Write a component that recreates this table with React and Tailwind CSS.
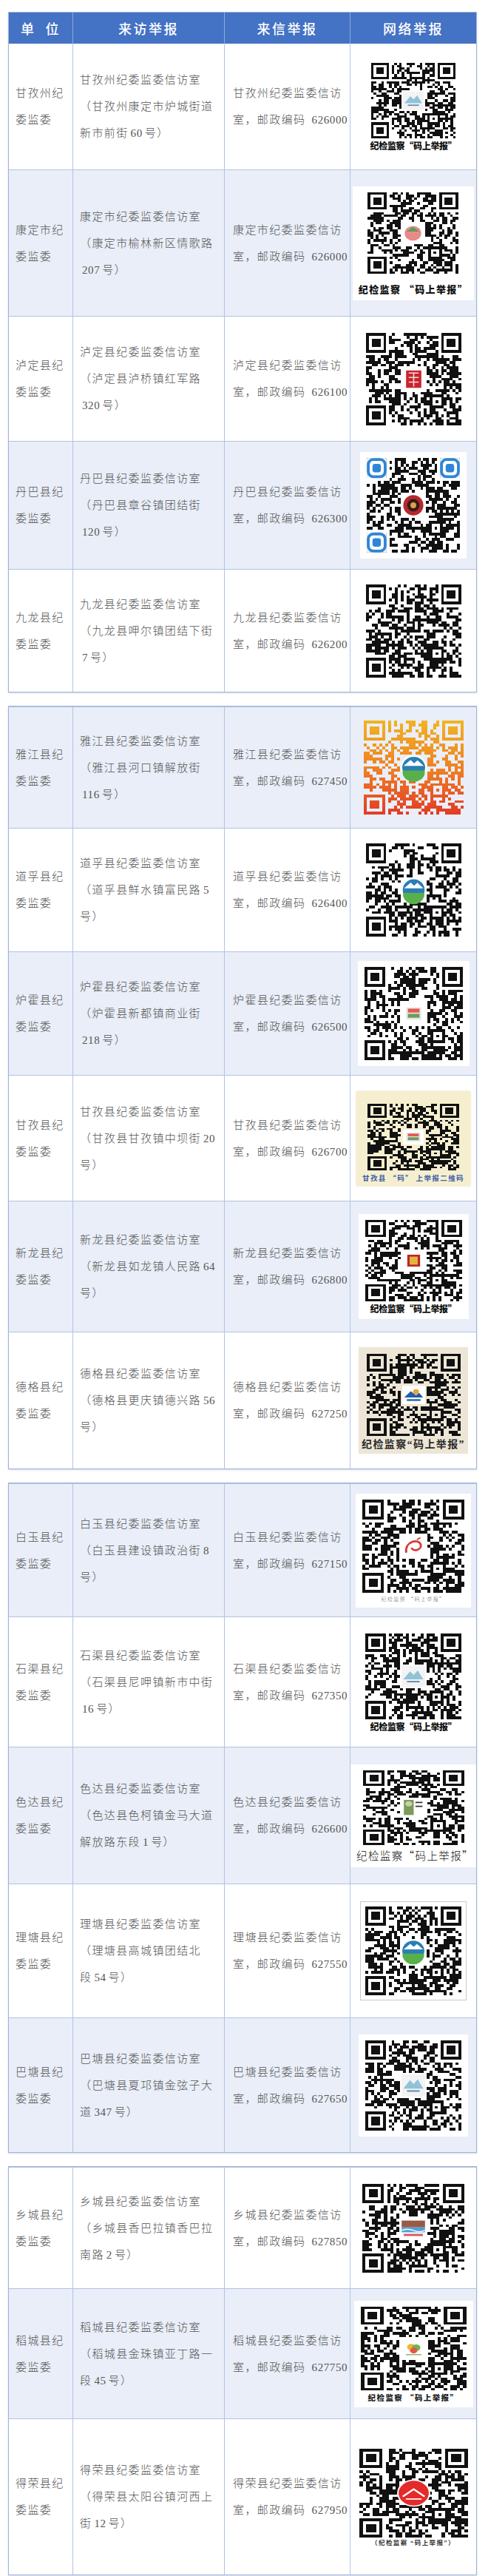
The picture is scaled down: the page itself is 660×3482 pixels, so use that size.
import React from "react";

// seeded random so every QR keeps the same pattern
function rng(seed) {
  let a = seed * 9301 + 49297;
  return function () {
    a |= 0;
    a = (a + 0x6d2b79f5) | 0;
    let t = Math.imul(a ^ (a >>> 15), 1 | a);
    t = (t + Math.imul(t ^ (t >>> 7), 61 | t)) ^ t;
    return ((t ^ (t >>> 14)) >>> 0) / 4294967296;
  };
}

const N = 33;
const C = N / 2;

function qrPath(seed, hole) {
  const r = rng(seed);
  const g = [];
  for (let y = 0; y < N; y++) {
    g.push([]);
    for (let x = 0; x < N; x++) g[y].push(r() < 0.53);
  }
  const finder = (ox, oy) => {
    for (let y = -1; y < 8; y++)
      for (let x = -1; x < 8; x++) {
        const X = ox + x;
        const Y = oy + y;
        if (X < 0 || Y < 0 || X >= N || Y >= N) continue;
        const ring = x === 0 || x === 6 || y === 0 || y === 6;
        const core = x >= 2 && x <= 4 && y >= 2 && y <= 4;
        g[Y][X] = x >= 0 && x <= 6 && y >= 0 && y <= 6 && (ring || core);
      }
  };
  finder(0, 0);
  finder(N - 7, 0);
  finder(0, N - 7);
  const a = N - 9;
  for (let y = a - 2; y <= a + 2; y++)
    for (let x = a - 2; x <= a + 2; x++) {
      const ring = x === a - 2 || x === a + 2 || y === a - 2 || y === a + 2;
      g[y][x] = ring || (x === a && y === a);
    }
  if (hole) {
    for (let y = 12; y < 21; y++) for (let x = 12; x < 21; x++) g[y][x] = false;
  }
  let d = "";
  for (let y = 0; y < N; y++)
    for (let x = 0; x < N; x++) if (g[y][x]) d += `M${x} ${y}h1v1h-1z`;
  return d;
}

// logos are drawn around a 29-module centre, shifted to the middle of the code
function Logo({ kind }) {
  let body = null;
  if (kind === "mountain")
    body = (
      <g>
        <rect x="11" y="11" width="7" height="7" fill="#f3f3f3" />
        <path d="M11.5 15.5 L13.5 12.8 L14.6 14 L15.8 12.5 L17.5 15.5Z" fill="#8fc3d8" />
        <rect x="12.6" y="16" width="3.8" height="0.5" fill="#6a8fb0" />
      </g>
    );
  if (kind === "pink")
    body = (
      <g>
        <rect x="11" y="11" width="7" height="7" fill="#fff" />
        <circle cx="14.5" cy="14.6" r="2.6" fill="#e98a8a" />
        <path d="M12.5 14 L14.5 12.3 L16.5 14Z" fill="#5aa05a" />
      </g>
    );
  if (kind === "seal")
    body = (
      <g>
        <rect x="11.5" y="11.2" width="6" height="6.6" fill="#fff" />
        <rect x="12.2" y="11.8" width="4.6" height="5.4" fill="#c9252c" />
        <path d="M13 12.6h3M13 14h3M13 15.4h3M14.5 12.4v4.4" stroke="#f7d9d9" strokeWidth="0.35" />
      </g>
    );
  if (kind === "camera")
    body = (
      <g>
        <rect x="11" y="11" width="7" height="7" fill="#fff" />
        <circle cx="14.5" cy="14.5" r="3.1" fill="#b5282e" />
        <circle cx="14.5" cy="14.5" r="1.9" fill="#3a1a1a" />
        <circle cx="14.5" cy="14.5" r="0.9" fill="#d8a34a" />
      </g>
    );
  if (kind === "blueCircle")
    body = (
      <g>
        <circle cx="14.5" cy="14.5" r="3.8" fill="#fff" />
        <circle cx="14.5" cy="14.5" r="3.3" fill="#2a7fb5" />
        <path d="M11.6 14 L13.6 12.2 L14.6 13.2 L15.6 12.3 L17.4 14Z" fill="#fff" />
        <path d="M11.3 15.4 h6.4 v1 a3.3 3.3 0 0 1 -6.4 0Z" fill="#58b04a" />
      </g>
    );
  if (kind === "small")
    body = (
      <g>
        <rect x="11.3" y="11.3" width="6.4" height="6.4" rx="0.6" fill="#fff" />
        <rect x="12.3" y="12.6" width="4.4" height="3.8" fill="#e6e6e6" />
        <rect x="12.8" y="13" width="3.4" height="1.2" fill="#e45c4f" />
        <rect x="12.8" y="14.6" width="3.4" height="1.2" fill="#6a9e5c" />
      </g>
    );
  if (kind === "red")
    body = (
      <g>
        <rect x="11.3" y="11.3" width="6.4" height="6.4" fill="#fff" />
        <rect x="12.6" y="12.4" width="3.8" height="4.2" fill="#b7282b" />
        <rect x="13.3" y="13.1" width="2.4" height="2.8" fill="#e8b33b" />
      </g>
    );
  if (kind === "dege")
    body = (
      <g>
        <rect x="11" y="11.3" width="7" height="6.4" fill="#fff" />
        <circle cx="15.2" cy="13.4" r="0.9" fill="#f0a030" />
        <path d="M11.6 15.4 L13.6 13.2 L15.2 14.6 L16.2 13.8 L17.4 15.4Z" fill="#1f5ea8" />
        <rect x="12.4" y="16" width="4.2" height="0.6" fill="#1f5ea8" />
      </g>
    );
  if (kind === "swirl")
    body = (
      <g>
        <rect x="11" y="11" width="7" height="7" fill="#fff" />
        <path d="M12.5 16.5 C12 13 16 12 16.6 14 C17 15.6 14.4 16.4 14 15" stroke="#d63a3a" strokeWidth="0.6" fill="none" />
        <path d="M15.5 12.5 l1 -0.6" stroke="#d63a3a" strokeWidth="0.4" />
      </g>
    );
  if (kind === "photo")
    body = (
      <g>
        <rect x="11.2" y="11" width="6.6" height="7" rx="0.5" fill="#fff" />
        <rect x="11.7" y="11.5" width="2.8" height="5.8" fill="#7d9a5a" />
        <circle cx="13.1" cy="13" r="1" fill="#c9d2a6" />
        <path d="M15 12.5h2M15 14h2" stroke="#333" strokeWidth="0.5" />
      </g>
    );
  if (kind === "building")
    body = (
      <g>
        <rect x="10.8" y="11" width="7.4" height="7" fill="#fff" />
        <rect x="11.2" y="12" width="6.6" height="2.2" fill="#9a5a48" />
        <rect x="11.2" y="14.2" width="6.6" height="1.6" fill="#4fa3d9" />
        <path d="M11.2 15.2 q1.6 -0.8 3.3 0 t3.3 0" stroke="#fff" strokeWidth="0.3" fill="none" />
        <rect x="11.8" y="16.3" width="5.4" height="0.7" fill="#d35a6a" />
      </g>
    );
  if (kind === "daocheng")
    body = (
      <g>
        <rect x="11" y="11" width="7" height="7" fill="#fff" />
        <circle cx="13.8" cy="14" r="1.1" fill="#f0b43a" />
        <circle cx="15.2" cy="14.2" r="1.1" fill="#6cb54a" />
        <circle cx="14.5" cy="15.2" r="1" fill="#e2574c" />
        <rect x="12.4" y="16.4" width="4.2" height="0.4" fill="#8bbf6a" />
      </g>
    );
  if (kind === "redCircle")
    body = (
      <g>
        <circle cx="14.5" cy="14.5" r="4.4" fill="#fff" />
        <circle cx="14.5" cy="14.5" r="4" fill="#e42a2a" />
        <path d="M11.6 15.6 L14.5 13.2 L17.4 15.6" stroke="#fff" strokeWidth="0.5" fill="none" />
        <path d="M12.4 16.4 h4.2" stroke="#fff" strokeWidth="0.4" />
      </g>
    );
  if (!body) return null;
  return <g transform={`translate(${C - 14.5} ${C - 14.5}) translate(14.5 14.5) scale(1.15) translate(-14.5 -14.5)`}>{body}</g>;
}

function QR({ w, h, seed, logo, grad, rounded }) {
  const id = `g${seed}`;
  return (
    <svg width={w} height={h} viewBox={`-0.3 -0.3 ${N + 0.6} ${N + 0.6}`} preserveAspectRatio="none" shapeRendering="crispEdges" className="block">
      {grad && (
        <defs>
          <linearGradient id={id} x1="0" y1="0" x2="0" y2="1">
            <stop offset="0" stopColor="#f2b321" />
            <stop offset="0.55" stopColor="#ef7b25" />
            <stop offset="1" stopColor="#e23b26" />
          </linearGradient>
        </defs>
      )}
      <path d={qrPath(seed, !!logo)} fill={grad ? `url(#${id})` : "#111"} />
      {rounded && (
        <g shapeRendering="auto">
          {[[0, 0], [N - 7, 0], [0, N - 7]].map(([x, y]) => (
            <g key={`${x}-${y}`}>
              <rect x={x} y={y} width="7" height="7" fill="#fff" />
              <rect x={x + 0.5} y={y + 0.5} width="6" height="6" rx="1.8" fill="none" stroke="#2f86d6" strokeWidth="1" />
              <rect x={x + 2} y={y + 2} width="3" height="3" rx="0.9" fill="#2f86d6" />
            </g>
          ))}
        </g>
      )}
      <g shapeRendering="auto">
        <Logo kind={logo} />
      </g>
    </svg>
  );
}

const CAP = "纪检监察“码上举报”";

function Caption({ kind }) {
  if (kind === "bold")
    return <div className="mt-[2px] text-center font-['Noto_Sans_CJK_SC',sans-serif] text-[12px] font-black leading-[14px] tracking-[-0.3px] text-[#111]">{CAP}</div>;
  if (kind === "bold13")
    return <div className="mt-[12px] text-center font-['Noto_Sans_CJK_SC',sans-serif] text-[13px] font-black leading-[16px] text-[#111]">纪检监察 “码上举报”</div>;
  if (kind === "boldsmall")
    return <div className="mt-[3px] text-center font-['Noto_Sans_CJK_SC',sans-serif] text-[10.5px] font-black leading-[12px] text-[#222]">纪检监察 “码上举报”</div>;
  if (kind === "serif")
    return <div className="mt-[2px] text-center font-['Liberation_Serif','Noto_Sans_CJK_SC',serif] text-[14px] font-bold leading-[18px] text-[#2a2a2a]">{CAP}</div>;
  if (kind === "regular")
    return <div className="mt-[4px] text-center font-['Noto_Sans_CJK_SC',sans-serif] text-[14.5px] leading-[18px] text-[#111]">{CAP}</div>;
  if (kind === "tiny")
    return <div className="mt-[3px] text-center font-['Noto_Sans_CJK_SC',sans-serif] text-[7px] leading-[9px] text-[#666]">纪检监察 “码上举报”</div>;
  if (kind === "paren")
    return <div className="mt-[1px] text-center font-['Liberation_Serif','Noto_Sans_CJK_SC',serif] text-[8.5px] font-bold leading-[10px] text-[#333]">（纪检监察 “码上举报”）</div>;
  if (kind === "blue")
    return <div className="mt-[3px] text-center font-['Noto_Sans_CJK_SC',sans-serif] text-[9.5px] font-bold leading-[12px] text-[#3b5fa8]">甘孜县 “码” 上举报二维码</div>;
  return null;
}

function Code({ q }) {
  const inner = (
    <div className="flex flex-col items-center">
      <QR w={q.w} h={q.h} seed={q.seed} logo={q.logo} grad={q.grad} rounded={q.rounded} />
      {q.cap && <Caption kind={q.cap} />}
    </div>
  );
  if (q.card === "white") return <div className="bg-white px-[8px] py-[7px]">{inner}</div>;
  if (q.card === "framed") return <div className="border border-[#c9c9c9] bg-white px-[5px] py-[5px]">{inner}</div>;
  if (q.card === "yellow") return <div className="bg-[#f6efcf] px-[8px] pb-[5px] pt-[16px] shadow-[0_0_2px_#d8d2b0]">{inner}</div>;
  if (q.card === "beige") return <div className="bg-[#ede6d6] px-[4px] pb-[3px] pt-[8px]">{inner}</div>;
  return inner;
}

function Txt({ s }) {
  const parts = s.split(/(\d+)/);
  return parts.map((p, i) =>
    /^\d+$/.test(p) ? (
      <span key={i} className="mx-[3px] font-['Liberation_Serif',serif] tracking-[0.6px]">
        {p}
      </span>
    ) : (
      <span key={i}>{p}</span>
    )
  );
}

function Lines({ lines }) {
  return (
    <div>
      {lines.map((l, i) => (
        <div key={i} className="h-[36px] whitespace-nowrap leading-[36px]">
          <Txt s={l} />
        </div>
      ))}
    </div>
  );
}

const rows = [
  { n: "甘孜州", v: ["甘孜州纪委监委信访室", "（甘孜州康定市炉城街道", "新市前街60号）"], p: "626000", h: 170, q: { w: 116, h: 104, seed: 3, logo: "mountain", cap: "bold" } },
  { n: "康定市", v: ["康定市纪委监委信访室", "（康定市榆林新区情歌路", "207号）"], p: "626000", h: 198, s: 1, q: { w: 125, h: 112, seed: 7, logo: "pink", cap: "bold13", card: "white" } },
  { n: "泸定县", v: ["泸定县纪委监委信访室", "（泸定县泸桥镇红军路", "320号）"], p: "626100", h: 169, q: { w: 131, h: 127, seed: 11, logo: "seal" } },
  { n: "丹巴县", v: ["丹巴县纪委监委信访室", "（丹巴县章谷镇团结街", "120号）"], p: "626300", h: 173, s: 1, q: { w: 128, h: 130, seed: 13, logo: "camera", rounded: true, card: "white" } },
  { n: "九龙县", v: ["九龙县纪委监委信访室", "（九龙县呷尔镇团结下街", "7号）"], p: "626200", h: 166, q: { w: 131, h: 128, seed: 17 } },
];

const rows2 = [
  { n: "雅江县", v: ["雅江县纪委监委信访室", "（雅江县河口镇解放街", "116号）"], p: "627450", h: 164, s: 1, q: { w: 137, h: 129, seed: 19, logo: "blueCircle", grad: true } },
  { n: "道孚县", v: ["道孚县纪委监委信访室", "（道孚县鲜水镇富民路5", "号）"], p: "626400", h: 167, q: { w: 131, h: 128, seed: 23, logo: "blueCircle" } },
  { n: "炉霍县", v: ["炉霍县纪委监委信访室", "（炉霍县新都镇商业街", "218号）"], p: "626500", h: 167, s: 1, q: { w: 135, h: 128, seed: 29, logo: "small", card: "white" } },
  { n: "甘孜县", v: ["甘孜县纪委监委信访室", "（甘孜县甘孜镇中坝街20", "号）"], p: "626700", h: 170, q: { w: 126, h: 92, seed: 31, logo: "small", cap: "blue", card: "yellow" } },
  { n: "新龙县", v: ["新龙县纪委监委信访室", "（新龙县如龙镇人民路64", "号）"], p: "626800", h: 177, s: 1, q: { w: 133, h: 112, seed: 37, logo: "red", cap: "bold", card: "white" } },
  { n: "德格县", v: ["德格县纪委监委信访室", "（德格县更庆镇德兴路56", "号）"], p: "627250", h: 185, q: { w: 129, h: 113, seed: 41, logo: "dege", cap: "serif", card: "beige" } },
];

const rows3 = [
  { n: "白玉县", v: ["白玉县纪委监委信访室", "（白玉县建设镇政治街8", "号）"], p: "627150", h: 180, s: 1, q: { w: 140, h: 128, seed: 43, logo: "swirl", cap: "tiny", card: "white" } },
  { n: "石渠县", v: ["石渠县纪委监委信访室", "（石渠县尼呷镇新市中街", "16号）"], p: "627350", h: 176, q: { w: 132, h: 118, seed: 47, logo: "mountain", cap: "bold" } },
  { n: "色达县", v: ["色达县纪委监委信访室", "（色达县色柯镇金马大道", "解放路东段1号）"], p: "626600", h: 185, s: 1, q: { w: 139, h: 103, seed: 53, logo: "photo", cap: "regular", card: "white" } },
  { n: "理塘县", v: ["理塘县纪委监委信访室", "（理塘县高城镇团结北", "段54号）"], p: "627550", h: 181, q: { w: 132, h: 122, seed: 59, logo: "blueCircle", card: "framed" } },
  { n: "巴塘县", v: ["巴塘县纪委监委信访室", "（巴塘县夏邛镇金弦子大", "道347号）"], p: "627650", h: 182, s: 1, q: { w: 132, h: 124, seed: 61, logo: "mountain", card: "white" } },
];

const rows4 = [
  { n: "乡城县", v: ["乡城县纪委监委信访室", "（乡城县香巴拉镇香巴拉", "南路2号）"], p: "627850", h: 164, q: { w: 140, h: 122, seed: 67, logo: "building" } },
  { n: "稻城县", v: ["稻城县纪委监委信访室", "（稻城县金珠镇亚丁路一", "段45号）"], p: "627750", h: 176, s: 1, q: { w: 145, h: 115, seed: 71, logo: "daocheng", cap: "boldsmall", card: "white" } },
  { n: "得荣县", v: ["得荣县纪委监委信访室", "（得荣县太阳谷镇河西上", "街12号）"], p: "627950", h: 211, q: { w: 149, h: 122, seed: 73, logo: "redCircle", cap: "paren" } },
];

function Row({ r, first }) {
  const bg = r.s ? "bg-[#e9eef8]" : "bg-white";
  return (
    <div
      className={`grid grid-cols-[86px_205px_170px_1fr] ${bg} ${first ? "" : "border-t border-[#b3c3e3]"}`}
      style={{ height: r.h }}
    >
      <div className="flex items-center pl-[9px]">
        <Lines lines={[r.n + "纪", "委监委"]} />
      </div>
      <div className="flex items-center border-l border-[#b3c3e3] pl-[9px]">
        <Lines lines={r.v} />
      </div>
      <div className="flex items-center border-l border-[#b3c3e3] pl-[11px]">
        <Lines lines={[r.n + "纪委监委信访", "室，邮政编码" + " " + r.p]} />
      </div>
      <div className="flex items-center justify-center border-l border-[#b3c3e3]">
        <Code q={r.q} />
      </div>
    </div>
  );
}

function Table({ list, header }) {
  return (
    <div className="w-[634px] border border-[#9fb3d9] shadow-[0_1px_2px_rgba(120,140,180,0.35)]">
      {header && (
        <div className="grid h-[42px] grid-cols-[86px_205px_170px_1fr] bg-[#4472c4] font-['Noto_Sans_CJK_SC',sans-serif] text-[18px] font-medium tracking-[2.5px] text-white">
          <div className="flex items-center justify-center">单&nbsp;&nbsp;位</div>
          <div className="flex items-center justify-center border-l border-[#8eaadb]">来访举报</div>
          <div className="flex items-center justify-center border-l border-[#8eaadb]">来信举报</div>
          <div className="flex items-center justify-center border-l border-[#8eaadb]">网络举报</div>
        </div>
      )}
      {list.map((r, i) => (
        <Row key={r.n} r={r} first={i === 0 && header} />
      ))}
    </div>
  );
}

export default function App() {
  return (
    <div className="min-h-[3482px] bg-white pl-[11px] pt-[16px] font-['Liberation_Serif','Noto_Sans_CJK_SC',serif] text-[15px] font-light tracking-[1.4px] text-[#555]">
      <div className="flex flex-col gap-[18px]">
        <Table list={rows} header />
        <Table list={rows2} />
        <Table list={rows3} />
        <Table list={rows4} />
      </div>
    </div>
  );
}
